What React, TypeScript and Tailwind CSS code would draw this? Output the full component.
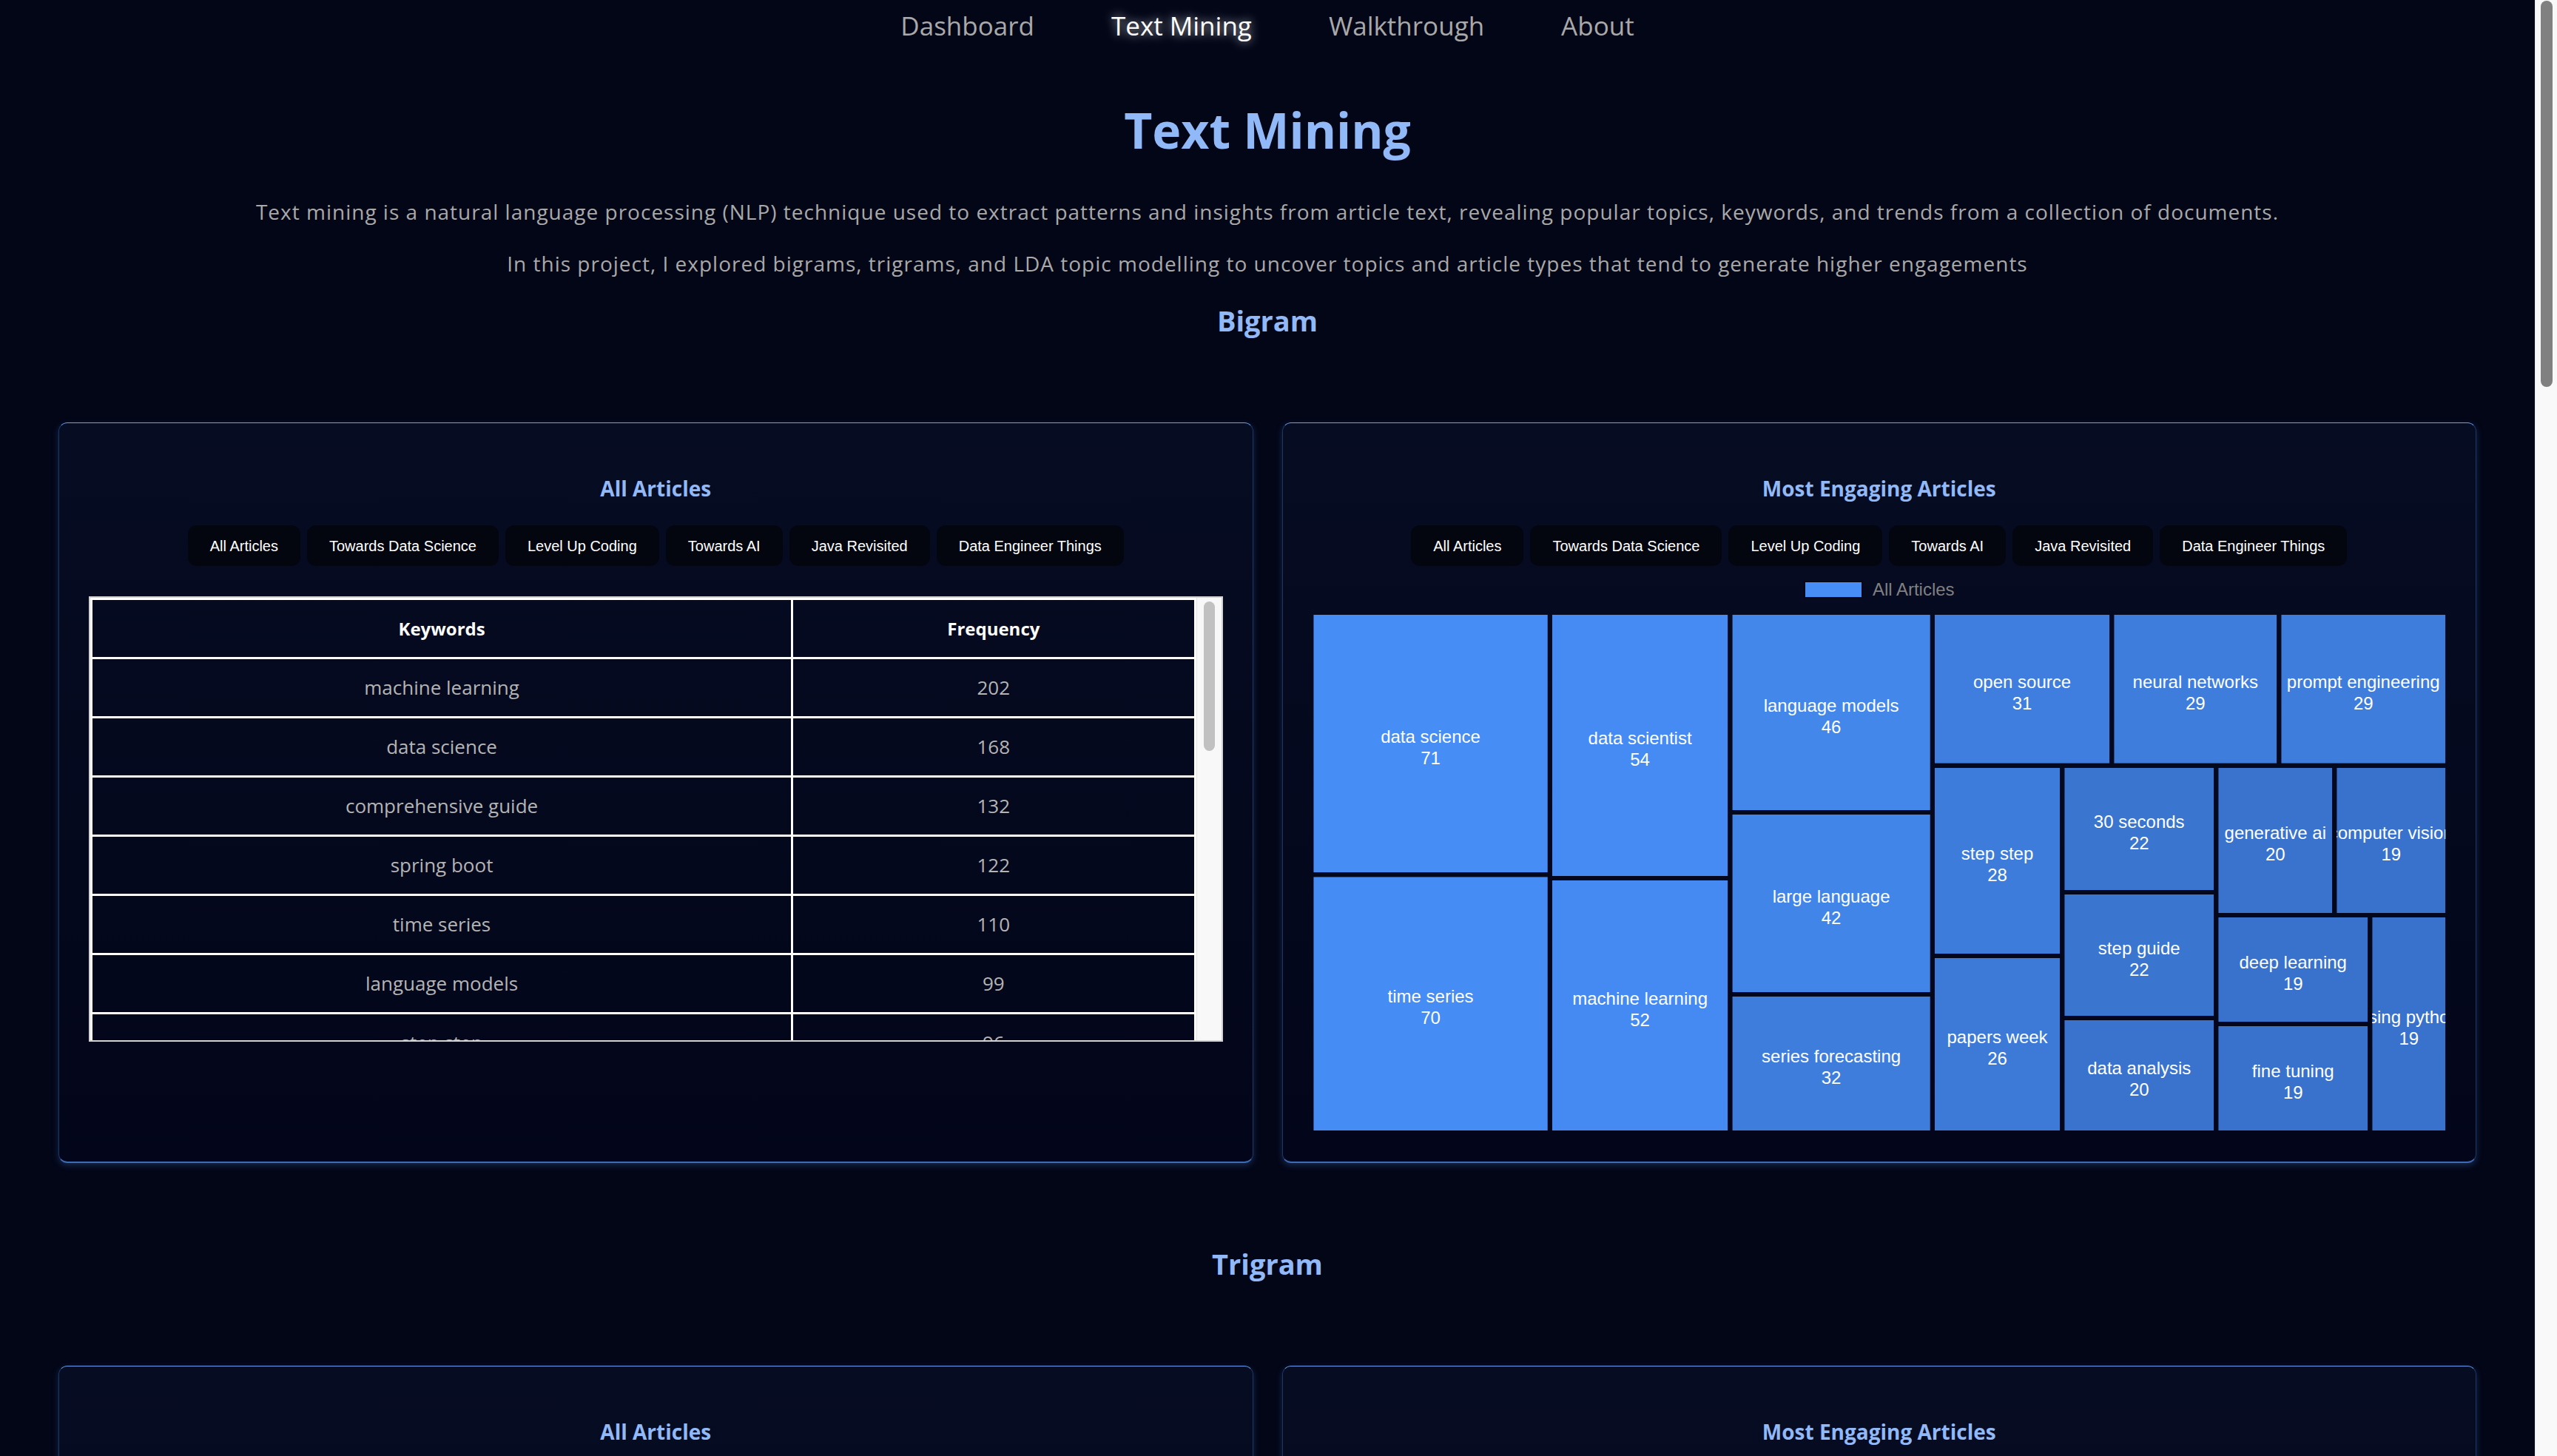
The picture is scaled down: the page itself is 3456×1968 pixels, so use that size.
import React from "react";

const sources = [
  "All Articles",
  "Towards Data Science",
  "Level Up Coding",
  "Towards AI",
  "Java Revisited",
  "Data Engineer Things",
];

type Row = [string, number];

const bigramRows: Row[] = [
  ["machine learning", 202],
  ["data science", 168],
  ["comprehensive guide", 132],
  ["spring boot", 122],
  ["time series", 110],
  ["language models", 99],
  ["step step", 96],
  ["data scientist", 91],
  ["large language", 88],
];

const trigramRows: Row[] = [
  ["large language models", 74],
  ["step step guide", 41],
  ["time series forecasting", 38],
  ["machine learning models", 27],
  ["spring boot application", 22],
  ["natural language processing", 21],
  ["retrieval augmented generation", 19],
];

// treemap cells: x0, y0, x1, y1 in a 1530 x 697 box
type Cell = { name: string; value: number; box: [number, number, number, number]; fill: string };

const bigramCells: Cell[] = [
  { name: "data science", value: 71, box: [0, 0, 319.6, 351.2], fill: "#468df5" },
  { name: "time series", value: 70, box: [0, 351.2, 319.6, 697], fill: "#468cf5" },
  { name: "data scientist", value: 54, box: [319.6, 0, 563.1, 356], fill: "#458bf3" },
  { name: "machine learning", value: 52, box: [319.6, 356, 563.1, 697], fill: "#458af2" },
  { name: "language models", value: 46, box: [563.1, 0, 836.6, 267], fill: "#4387eb" },
  { name: "large language", value: 42, box: [563.1, 267, 836.6, 513], fill: "#4285e8" },
  { name: "series forecasting", value: 32, box: [563.1, 513, 836.6, 697], fill: "#3f7ddd" },
  { name: "open source", value: 31, box: [836.6, 0, 1079, 203.8], fill: "#3f7ede" },
  { name: "neural networks", value: 29, box: [1079, 0, 1305, 203.8], fill: "#3f7ddd" },
  { name: "prompt engineering", value: 29, box: [1305, 0, 1530, 203.8], fill: "#3f7ddd" },
  { name: "step step", value: 28, box: [836.6, 203.8, 1012, 461], fill: "#3e7cdb" },
  { name: "papers week", value: 26, box: [836.6, 461, 1012, 697], fill: "#3d7ad8" },
  { name: "30 seconds", value: 22, box: [1012, 203.8, 1220, 375], fill: "#3a75d0" },
  { name: "step guide", value: 22, box: [1012, 375, 1220, 545], fill: "#3a75d0" },
  { name: "data analysis", value: 20, box: [1012, 545, 1220, 697], fill: "#3a73cd" },
  { name: "generative ai", value: 20, box: [1220, 203.8, 1380, 406], fill: "#3a73cd" },
  { name: "computer vision", value: 19, box: [1380, 203.8, 1530, 406], fill: "#3972cc" },
  { name: "deep learning", value: 19, box: [1220, 406, 1428, 553], fill: "#3972cc" },
  { name: "fine tuning", value: 19, box: [1220, 553, 1428, 697], fill: "#3972cc" },
  { name: "using python", value: 19, box: [1428, 406, 1530, 697], fill: "#3972cc" },
];

const trigramCells: Cell[] = bigramCells.map((c, i) => ({
  ...c,
  name: trigramRows[i % trigramRows.length][0],
}));

const W = 1530;
const H = 697;
const GAP = 3;

const Treemap = ({ cells, id }: { cells: Cell[]; id: string }) => {
  const rects = cells.map((c) => {
    const [x0, y0, x1, y1] = c.box;
    const x = x0 > 0 ? x0 + GAP : x0;
    const y = y0 > 0 ? y0 + GAP : y0;
    const w = (x1 < W ? x1 - GAP : x1) - x;
    const h = (y1 < H ? y1 - GAP : y1) - y;
    return { x, y, w, h };
  });

  return (
    <svg
      viewBox={`0 0 ${W} ${H}`}
      className="block h-[697px] w-full font-['Liberation_Sans',Arial,sans-serif]"
    >
      <defs>
        {rects.map((r, i) => (
          <clipPath id={`${id}-${i}`} key={i}>
            <rect x={r.x} y={r.y} width={r.w} height={r.h} />
          </clipPath>
        ))}
      </defs>
      {cells.map((c, i) => {
        const r = rects[i];
        const cx = r.x + r.w / 2;
        const cy = r.y + r.h / 2;
        return (
          <g key={c.name + i} clipPath={`url(#${id}-${i})`}>
            <rect x={r.x} y={r.y} width={r.w} height={r.h} fill={c.fill} />
            <text x={cx} y={cy - 10} textAnchor="middle" dominantBaseline="central" fill="#fff" fontSize="24">
              {c.name}
            </text>
            <text x={cx} y={cy + 19} textAnchor="middle" dominantBaseline="central" fill="#fff" fontSize="24">
              {c.value}
            </text>
          </g>
        );
      })}
    </svg>
  );
};

const SourceTabs = () => (
  <div className="mt-[33px] flex justify-center gap-[9px] font-['Liberation_Sans',Arial,sans-serif]">
    {sources.map((s) => (
      <button
        key={s}
        className="h-[55px] rounded-[12px] bg-[#03050f] px-[30px] text-[20px] text-white"
      >
        {s}
      </button>
    ))}
  </div>
);

const Card = ({ title, children }: { title: string; children: React.ReactNode }) => (
  <div className="rounded-[12px] border border-[#1c3766] border-t-[#6a9ef0] border-b-2 border-b-[#3d6bb8] bg-gradient-to-b from-[#060c22] to-[#03061a] px-[40px] pb-[42px] pt-[71px] shadow-[0_3px_8px_rgba(61,107,184,0.35)]">
    <h3 className="text-center text-[28px] font-bold leading-[34px] text-[#92b9f7]">{title}</h3>
    <SourceTabs />
    {children}
  </div>
);

const KeywordTable = ({ rows }: { rows: Row[] }) => (
  <div className="mt-[41px] flex h-[602px] border-2 border-[#d2d2d2]">
    <div className="min-w-0 flex-1 overflow-hidden">
      <table className="w-full border-collapse text-center">
        <thead>
          <tr className="h-[80px]">
            <th className="w-[63.5%] border-[3px] border-white text-[24px] font-bold text-white">Keywords</th>
            <th className="border-[3px] border-white text-[24px] font-bold text-white">Frequency</th>
          </tr>
        </thead>
        <tbody>
          {rows.map(([k, v]) => (
            <tr key={k} className="h-[80px]">
              <td className="border-[3px] border-white text-[26px] text-[#b4b4b4]">{k}</td>
              <td className="border-[3px] border-white text-[26px] text-[#b4b4b4]">{v}</td>
            </tr>
          ))}
        </tbody>
      </table>
    </div>
    <div className="w-[34px] shrink-0 border-l border-[#e4e4e4] bg-[#f8f8f8] pt-[5px]">
      <div className="mx-auto h-[202px] w-[15px] rounded-full bg-[#c1c1c1]" />
    </div>
  </div>
);

const Legend = () => (
  <div className="mt-[21px] flex h-[22px] items-center justify-center gap-[13px] font-['Liberation_Sans',Arial,sans-serif]">
    <span className="h-[24px] w-[80px] border-2 border-[#050814] bg-[#468df5]" />
    <span className="text-[24px] leading-none text-[#808080]">All Articles</span>
  </div>
);

const NgramSection = ({ title, rows, cells, id }: { title: string; rows: Row[]; cells: Cell[]; id: string }) => (
  <section>
    <h2 className="text-center text-[38px] font-bold leading-[46px] text-[#92b9f7]">{title}</h2>
    <div className="mt-[115px] grid grid-cols-2 gap-[39px] px-[79px]">
      <Card title="All Articles">
        <KeywordTable rows={rows} />
      </Card>
      <Card title="Most Engaging Articles">
        <Legend />
        <div className="mt-[23px]">
          <Treemap cells={cells} id={id} />
        </div>
      </Card>
    </div>
  </section>
);

const navItems = ["Dashboard", "Text Mining", "Walkthrough", "About"];

const App = () => {
  return (
    <div className="flex h-screen w-full overflow-hidden bg-[#030617] font-['Open_Sans',sans-serif]">
      <main className="min-w-0 flex-1 overflow-hidden">
        <nav className="flex h-[70px] items-center justify-center gap-[104px] text-[35px]">
          {navItems.map((n) =>
            n === "Text Mining" ? (
              <a key={n} className="text-white [text-shadow:0_0_14px_rgba(255,255,255,0.75)]">
                {n}
              </a>
            ) : (
              <a key={n} className="text-[#a9a9a9]">
                {n}
              </a>
            )
          )}
        </nav>

        <h1 className="mt-[66px] text-center text-[66px] font-bold leading-[79px] text-[#92b9f7]">Text Mining</h1>
        <p className="mt-[52px] text-center text-[28px] leading-[39px] tracking-[1px] text-[#a9a9a9]">
          Text mining is a natural language processing (NLP) technique used to extract patterns and insights from
          article text, revealing popular topics, keywords, and trends from a collection of documents.
        </p>
        <p className="mt-[31px] text-center text-[28px] leading-[39px] tracking-[1px] text-[#a9a9a9]">
          In this project, I explored bigrams, trigrams, and LDA topic modelling to uncover topics and article types
          that tend to generate higher engagements
        </p>

        <div className="mt-[34px]">
          <NgramSection title="Bigram" rows={bigramRows} cells={bigramCells} id="bi" />
        </div>
        <div className="mt-[113px]">
          <NgramSection title="Trigram" rows={trigramRows} cells={trigramCells} id="tri" />
        </div>
      </main>

      {/* page scrollbar */}
      <div className="w-[30px] shrink-0 border-l border-[#ececec] bg-[#f9f9f9] pt-[1px]">
        <div className="mx-auto h-[522px] w-[16px] rounded-full bg-[#808080]" />
      </div>
    </div>
  );
};

export default App;
